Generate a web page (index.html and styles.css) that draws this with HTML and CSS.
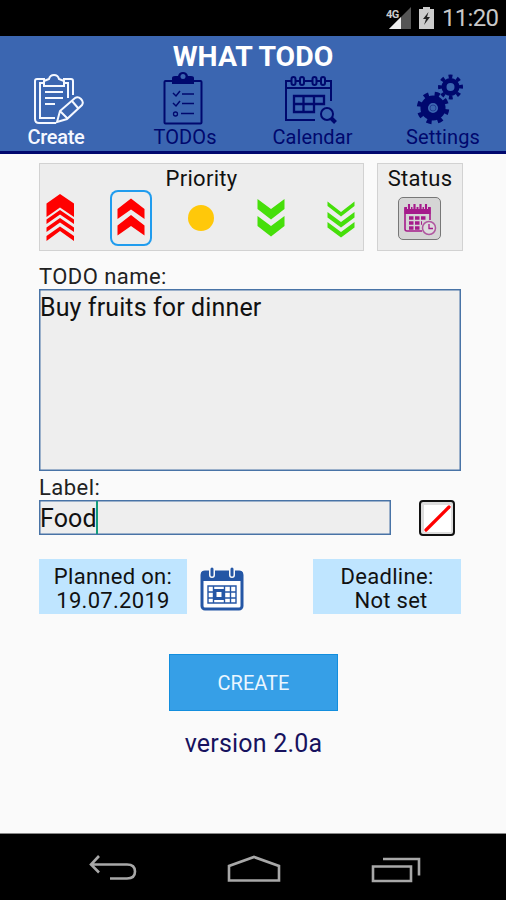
FILE: index.html
```html
<!DOCTYPE html>
<html lang="en">
<head>
<meta charset="utf-8">
<title>What TODO</title>
<link rel="stylesheet" href="styles.css">
</head>
<body>
<div class="statusbar">
  <svg class="signal" width="26" height="24" viewBox="0 0 26 24"><path d="M25 1v22H3z" fill="#555"/><path d="M15 11v12H3z" fill="#eee"/><text x="0" y="12" class="net">4G</text></svg>
  <svg class="battery" width="15" height="22" viewBox="0 0 15 22"><path d="M4 0h7v2h4v20H0V2h4z" fill="#ccc"/><path d="M9.500 5L4 12h3l-2 6 6-8H8z" fill="#222"/></svg>
  <span class="clock">11:20</span>
</div>
<header class="header">
  <h1 class="title">WHAT TODO</h1>
  <nav class="tabs">
    <div class="tab tab-create">
      <svg width="52" height="52" viewBox="0 0 52 52" fill="none" stroke="currentColor" stroke-width="2"><path d="M12 6H4q-2 0-2 2v38q0 4 4 4h17M30 6h8q2 0 2 2v14M12 10H7v35h15M30 10h5v15M11 13v-5l5-2q1-4 5-4t5 4l5 2v5zM12 19h18M12 25h18M12 31h10"/><path d="M24 49l3-11 15-13q3-2 6 1t1 6L34 46zM39 28l6 7M27 38l7 7"/></svg>
      <span>Create</span>
    </div>
    <div class="tab tab-todos">
      <svg width="40" height="54" viewBox="0 0 40 54" fill="none" stroke="currentColor" stroke-width="2"><rect x="1.500" y="10" width="37" height="42.500" rx="1"/><path d="M9 13V7q0-2 3-2h3q1-4 5-4t5 4h3q3 0 3 2v6z" fill="currentColor" stroke="none"/><circle cx="20" cy="5.500" r="2.500" fill="#3b66b1" stroke="none"/><path d="M10 22l3 3 4-5M10 32l3 3 4-5M19 23h12M19 32.500h12M18 42.500h13" stroke-width="1.500"/><circle cx="12.500" cy="43" r="2" stroke-width="1.300"/></svg>
      <span>TODOs</span>
    </div>
    <div class="tab tab-calendar">
      <svg width="52" height="50" viewBox="0 0 52 50" fill="none" stroke="currentColor" stroke-width="2"><path d="M6 6H1v39h29M41 6h5v20M10 6h6M19 6h9M31 6h5M1 13h45"/><rect x="6.500" y="2" width="4" height="8" rx="2"/><rect x="15" y="2" width="4" height="8" rx="2"/><rect x="27.500" y="2" width="4" height="8" rx="2"/><rect x="36" y="2" width="4" height="8" rx="2"/><path d="M9 21h30v8H9zM9 29v8h20V21M18.500 21v16M9 37h20" stroke-width="2.300"/><circle cx="42" cy="39" r="6"/><path d="M46 43l4.500 4.500" stroke-width="4"/></svg>
      <span>Calendar</span>
    </div>
    <div class="tab tab-settings">
      <svg width="48" height="52" viewBox="0 0 48 52" fill="none" stroke="currentColor"><circle cx="17" cy="35" r="8.800" stroke-width="7.500"/><circle cx="17" cy="35" r="14" stroke-width="4.500" stroke-dasharray="5 5.996" transform="rotate(5 17 35)"/><circle cx="17" cy="35" r="3" stroke-width="1" opacity=".4"/><circle cx="34.500" cy="14" r="6.500" stroke-width="5"/><circle cx="34.500" cy="14" r="10.500" stroke-width="4" stroke-dasharray="3.700 4.547" transform="rotate(-12 34.500 14)"/></svg>
      <span>Settings</span>
    </div>
  </nav>
</header>
<main class="content">
  <div class="panels">
    <section class="panel priority">
      <h2 class="panel-title">Priority</h2>
      <div class="levels">
        <div class="level"><svg width="42" height="56" viewBox="0 0 42 56" fill="#f00"><path d="M6.500 13.500L20 4l14 9.500V27l-14-9.500L6.500 27z"/><path d="M6.500 29.500L20 20l14 9.500V34L20 24.500 6.500 34zM6.500 37.500L20 28l14 9.500V42l-14-9.500L6.500 42zM6.500 46L20 36.500 34 46v5l-14-10L6.500 51z"/></svg></div>
        <div class="level selected"><svg width="42" height="56" viewBox="0 0 42 56" fill="#f00"><path d="M7.500 19L21 8.500 34.500 19v10L21 19.500 7.500 29zM7.500 35.500L21 25l13.500 10.500v10L21 36 7.500 45.500z"/></svg></div>
        <div class="level"><svg width="42" height="56" viewBox="0 0 42 56"><circle cx="21" cy="28" r="13" fill="#ffc80a"/></svg></div>
        <div class="level"><svg width="42" height="56" viewBox="0 0 42 56" fill="#46df0a"><path d="M7.500 9L21 19 34.500 9v10L21 29.500 7.500 19zM7.500 26L21 36l13.500-10v10L21 46.500 7.500 36z"/></svg></div>
        <div class="level"><svg width="42" height="56" viewBox="0 0 42 56" fill="#46df0a"><path d="M7.500 11.500L21 22l13.500-10.500V16L21 26.500 7.500 16zM7.500 22L21 32l13.500-10v5.500L21 37.500l-13.500-10zM7.500 32L21 42l13.500-10v5.500L21 47.500l-13.500-10z"/></svg></div>
      </div>
    </section>
    <section class="panel status">
      <h2 class="panel-title">Status</h2>
      <div class="status-button"><svg width="34" height="34" viewBox="0 0 34 34" fill="none" stroke="#a51b8b" stroke-width="1.600"><path d="M19 29H4q-2 0-2-2V6h25v12"/><path d="M1.500 5h26v7h-26z" fill="#a51b8b" stroke="none"/><path d="M6 2v5M11.500 2v5M17.500 2v5M23 2v5" stroke="#ddd" stroke-width="4"/><path d="M6 2v5M11.500 2v5M17.500 2v5M23 2v5" stroke-width="2.200"/><path d="M6 16h18M6 21h13M6 26h11" stroke-width="3.500" stroke-dasharray="4.500 1.500"/><circle cx="26" cy="26" r="6.500" fill="#ddd" stroke="#b0569f" stroke-width="1.500"/><path d="M26 22v4.500h4" stroke-width="1.300"/></svg></div>
    </section>
  </div>
  <div class="label name-label">TODO name:</div>
  <div class="field name-field">Buy fruits for dinner</div>
  <div class="label tag-label">Label:</div>
  <div class="tag-row">
    <div class="field tag-field"><span>Food</span><i class="caret"></i></div>
    <div class="color-button"><svg width="27" height="27" viewBox="0 0 27 27"><path d="M2 25L25 2" stroke="#f00" stroke-width="3.200" stroke-linecap="round"/></svg></div>
  </div>
  <div class="dates">
    <div class="date planned"><span>Planned on:</span><span>19.07.2019</span></div>
    <svg class="date-icon" width="44" height="44" viewBox="0 0 44 44" fill="none" stroke="#2456a5"><rect x="2" y="5" width="40" height="37" rx="3" stroke-width="3" fill="#fff"/><path d="M1 14V7q0-3 3-3h36q3 0 3 3v7z" fill="#2456a5" stroke="none"/><path d="M12 2v6M32 2v6" stroke="#fafafa" stroke-width="6" stroke-linecap="round"/><path d="M12 2v6M32 2v6" stroke-width="3" stroke-linecap="round"/><path d="M8 19h28v17H8zM8 25h28M8 31h28M13.500 19v17M24.500 19v17M30.500 19v17" stroke-width="1.400"/><path d="M15 23.500h8v8h-8z" stroke-width="3" fill="#fff"/></svg>
    <div class="date deadline"><span>Deadline:</span><span class="unset">Not set</span></div>
  </div>
  <div class="create-button">CREATE</div>
  <div class="version">version 2.0a</div>
</main>
<footer class="navbar">
  <svg width="48" height="28" viewBox="0 0 48 28"><path d="M10 1L2 9.500l8 8M2 9.500h36q8 0 8 7t-8 7H21"/></svg>
  <svg width="54" height="28" viewBox="0 0 54 28"><path d="M2 25.500V11L27 2l25 9v14.500z"/></svg>
  <svg width="50" height="28" viewBox="0 0 50 28"><path d="M2 11.500h38V26H2zM12 4h36v16.500"/></svg>
</footer>
</body>
</html>
```
FILE: styles.css
```css
* { box-sizing: border-box; }
body { margin: 0; width: 506px; height: 900px; display: flex; flex-direction: column; background: #fafafa; color: #111; font-family: Roboto, "Liberation Sans", sans-serif; white-space: nowrap; overflow: hidden; }
svg { display: block; flex: none; }
.statusbar { height: 36px; flex: none; display: flex; justify-content: flex-end; align-items: center; padding-right: 8px; background: #000; color: #c8c8c8; }
.signal { margin-right: 7px; }
.net { font: bold 11px Roboto, sans-serif; fill: #ccc; letter-spacing: -.5px; }
.battery { margin-right: 8px; }
.clock { width: 56px; font-size: 24px; line-height: 34px; letter-spacing: -.7px; }
.header { height: 118px; flex: none; background: #3b66b1; border-bottom: 3px solid #00086e; }
.title { margin: 0; padding-top: 4px; font-size: 28.4px; line-height: 34px; font-weight: 700; color: #fff; text-align: center; }
.tabs { display: grid; grid-template-columns: 112px 146px 109px 139px; height: 78px; margin-top: -3px; color: #00086e; }
.tab { display: flex; flex-direction: column; align-items: center; justify-content: flex-end; font-size: 20px; line-height: 24px; letter-spacing: .1px; }
.tab-create { color: #f5f8ff; font-weight: 500; letter-spacing: -.3px; }
.tab-create svg { margin-left: 6px; }
.tab-todos svg { margin-right: 4px; }
.tab-calendar svg { margin-right: 4px; }
.tab-settings { padding-left: 13px; }
.tab-settings svg { margin-right: 7px; }
.content { flex: 1; padding: 9px 43px 0 39px; }
.panels { display: flex; gap: 13px; height: 88px; }
.panel { background: #ededed; border: 1px solid #d2d2d2; }
.priority { width: 325px; }
.status { width: 86px; display: flex; flex-direction: column; align-items: center; }
.panel-title { margin: 0; padding-top: 2px; font-size: 22px; line-height: 26px; font-weight: 400; text-align: center; letter-spacing: .3px; }
.levels { display: flex; justify-content: space-between; padding-right: 1px; margin-top: -2px; }
.level { width: 42px; height: 56px; }
.selected { box-shadow: inset 0 0 0 2px #209cee; border-radius: 8px; }
.status-button { width: 43px; height: 43px; margin: 5px 1px 0 0; display: grid; place-items: center; background: #d5d5d5; border: 1px solid #777; border-radius: 5px; }
.label { font-size: 22px; line-height: 26px; letter-spacing: .45px; color: #222; }
.name-label { margin-top: 13px; margin-bottom: -1px; }
.field { background: #eee; border: 1px solid #4873a6; box-shadow: inset 0 0 0 .5px #4873a6; font-size: 25px; letter-spacing: .12px; }
.name-field { width: 422px; height: 182px; line-height: 35px; }
.tag-label { margin-top: 4px; }
.tag-row { display: flex; justify-content: space-between; margin-top: -1px; padding-right: 8px; }
.tag-field { width: 352px; height: 35px; display: flex; line-height: 35px; }
.caret { width: 2px; height: 33px; background: #149c7c; margin-left: -1px; }
.color-button { width: 36px; height: 36px; display: grid; place-items: center; border: 2px solid #111; border-radius: 4px; background: #ddd; }
.color-button svg { background: #fff; }
.dates { display: flex; align-items: center; margin-top: 23px; }
.date { width: 148px; height: 55px; display: flex; flex-direction: column; align-items: center; padding-top: 6px; background: #bfe5ff; font-size: 22px; line-height: 24px; letter-spacing: .3px; }
.date-icon { margin: 4px 69px 0 13px; }
.unset { padding-left: 8px; }
.create-button { width: 169px; height: 57px; margin: 40px 0 0 130px; border: 1px solid #128ede; background: #369fe7; color: #eaf6ff; font-size: 20px; line-height: 56px; text-align: center; }
.version { width: 169px; margin: 18px 0 0 130px; font-size: 25px; line-height: 30px; text-align: center; color: #17125e; letter-spacing: .2px; }
.navbar { height: 67px; flex: none; display: flex; align-items: center; padding: 3px 85px 0 89px; justify-content: space-between; background: #000; border-top: 1px solid #888; }
.navbar path { fill: none; stroke: #a8a8a8; stroke-width: 2.600; }
```
